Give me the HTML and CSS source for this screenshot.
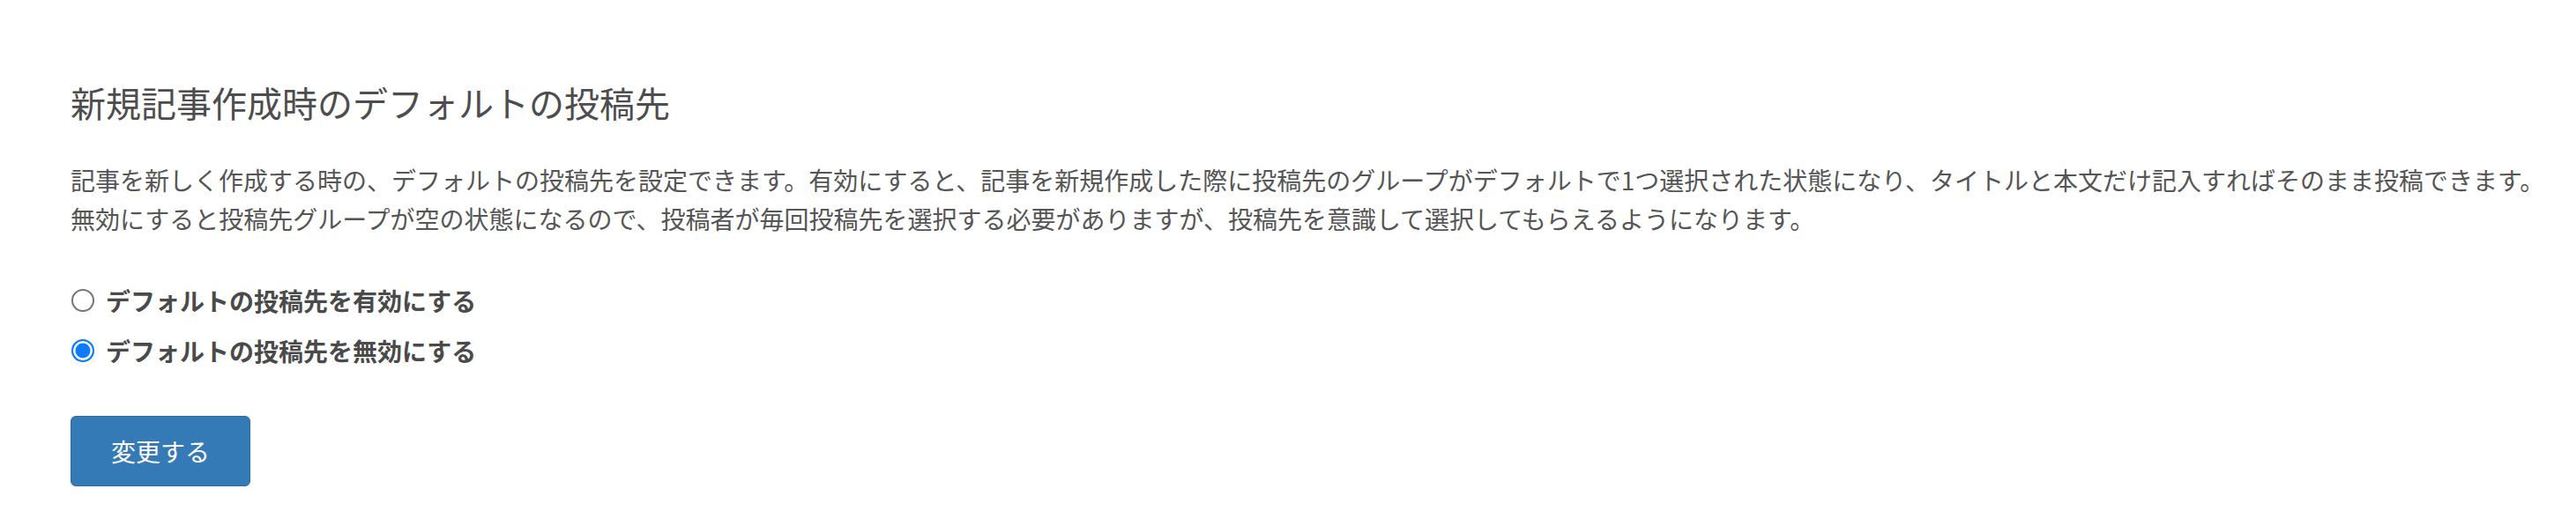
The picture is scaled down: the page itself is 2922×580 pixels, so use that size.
FILE: index.html
```html
<!DOCTYPE html>
<html lang="ja">
<head>
<meta charset="utf-8">
<title>新規記事作成時のデフォルトの投稿先</title>
<link rel="stylesheet" href="styles.css">
</head>
<body>
<main class="settings">
  <h2 class="settings-title">新規記事作成時のデフォルトの投稿先</h2>
  <p class="settings-desc">
    <span class="line">記事を新しく作成する時の、デフォルトの投稿先を設定できます。有効にすると、記事を新規作成した際に投稿先のグループがデフォルトで1つ選択された状態になり、タイトルと本文だけ記入すればそのまま投稿できます。</span>
    <span class="line">無効にすると投稿先グループが空の状態になるので、投稿者が毎回投稿先を選択する必要がありますが、投稿先を意識して選択してもらえるようになります。</span>
  </p>
  <form class="settings-form">
    <div class="radio-list">
      <label class="radio-row">
        <input class="radio" type="radio" name="default_target" value="enable">
        <span class="radio-label">デフォルトの投稿先を有効にする</span>
      </label>
      <label class="radio-row">
        <input class="radio" type="radio" name="default_target" value="disable" checked>
        <span class="radio-label">デフォルトの投稿先を無効にする</span>
      </label>
    </div>
    <button class="btn-primary" type="button">変更する</button>
  </form>
</main>
</body>
</html>
```

FILE: styles.css
```css
html, body {
  margin: 0;
  padding: 0;
  background: #ffffff;
}

body {
  font-family: "Noto Sans CJK JP", "Noto Sans", sans-serif;
  color: #555555;
}

.settings {
  padding: 92px 0 0 80px;
}

.settings-title {
  margin: 0;
  font-size: 40px;
  line-height: 48px;
  font-weight: 400;
  color: #4d4d4d;
}

.settings-desc {
  margin: 42px 0 0 0;
  font-size: 28px;
  line-height: 44px;
  color: #555555;
}

.settings-desc .line {
  display: block;
  white-space: nowrap;
}

.settings-form {
  margin-top: 51px;
}

.radio-list {
  display: flex;
  flex-direction: column;
  gap: 17px;
}

.radio-row {
  display: flex;
  align-items: center;
  gap: 13px;
  height: 40px;
  cursor: pointer;
}

.radio {
  appearance: none;
  -webkit-appearance: none;
  margin: 0 0 0 1px;
  width: 26px;
  height: 26px;
  border-radius: 50%;
  border: 2px solid #767676;
  background: #ffffff;
  box-sizing: border-box;
  flex: none;
}

.radio:checked {
  border: 2px solid #0a7cff;
  background: #0a7cff;
  box-shadow: inset 0 0 0 2.5px #ffffff;
}

.radio-label {
  font-size: 28px;
  line-height: 40px;
  font-weight: 700;
  color: #4a4a4a;
}

.btn-primary {
  display: block;
  margin-top: 54px;
  padding: 19px 45px;
  font-family: "Noto Sans CJK JP", "Noto Sans", sans-serif;
  font-size: 28px;
  line-height: 40px;
  white-space: nowrap;
  color: #ffffff;
  background: #337ab7;
  border: 1px solid #2e6da4;
  border-radius: 6px;
}
```
